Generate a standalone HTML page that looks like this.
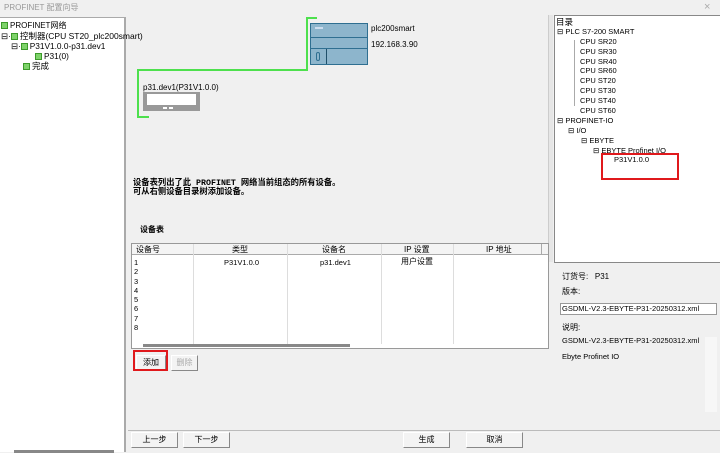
<!DOCTYPE html>
<html><head><meta charset="utf-8"><style>
*{margin:0;padding:0;box-sizing:border-box}
body{width:720px;height:452px;overflow:hidden;background:#f0f0f0;font-family:"Liberation Sans","Noto Sans CJK SC",sans-serif;font-size:8px;color:#000;position:relative}
.a{position:absolute;white-space:nowrap}
.btn{position:absolute;height:16px;background:#f3f3f3;border:1px solid #fff;border-right-color:#888;border-bottom-color:#888;text-align:center;line-height:14px;font-size:8px}
.sq{display:inline-block;width:7px;height:7px;background:#7ed36a;border:1px solid #3c9a2a;vertical-align:-1px;margin-right:2px}
</style></head><body>
<div class="a" style="left:4px;top:2px;color:#999;font-size:8px">PROFINET 配置向导</div>
<div class="a" style="left:704px;top:1px;color:#aaa;font-size:11px">×</div>
<!-- left tree -->
<div class="a" style="left:0;top:17px;width:126px;height:435px;background:#fff;border-right:2px solid #aaa;border-top:1px solid #aaa"></div>
<div class="a" style="left:1px;top:20px"><span class="sq"></span>PROFINET网络</div>
<div class="a" style="left:1px;top:30px;font-size:8.5px">⊟·<span class="sq"></span>控制器(CPU ST20_plc200smart)</div>
<div class="a" style="left:11px;top:41px;font-size:8.3px">⊟·<span class="sq"></span>P31V1.0.0-p31.dev1</div>
<div class="a" style="left:35px;top:51px;font-size:8.3px"><span class="sq"></span>P31(0)</div>
<div class="a" style="left:23px;top:60px;font-size:8.5px"><span class="sq"></span>完成</div>
<div class="a" style="left:14px;top:450px;width:100px;height:3px;background:#888"></div>
<!-- network -->
<div class="a" style="left:306px;top:17px;width:11px;height:52px;border:2px solid #4de04d;border-right:none;border-bottom:none"></div>
<div class="a" style="left:138px;top:69px;width:170px;height:2px;background:#4de04d"></div>
<div class="a" style="left:137px;top:69px;width:2px;height:48px;background:#4de04d"></div>
<div class="a" style="left:137px;top:116px;width:12px;height:2px;background:#4de04d"></div>
<div class="a" style="left:310px;top:23px;width:58px;height:42px;background:#8db5cc;border:1px solid #2f6f91"></div>
<div class="a" style="left:311px;top:37px;width:56px;height:1px;background:#2f6f91"></div>
<div class="a" style="left:311px;top:48px;width:56px;height:1px;background:#2f6f91"></div>
<div class="a" style="left:326px;top:49px;width:1px;height:15px;background:#1f4f6a"></div>
<div class="a" style="left:315px;top:27px;width:8px;height:2px;background:#cde"></div>
<div class="a" style="left:316px;top:52px;width:4px;height:9px;border:1px solid #2f6f91;border-radius:2px"></div>
<div class="a" style="left:371px;top:24px">plc200smart</div>
<div class="a" style="left:371px;top:40px">192.168.3.90</div>
<div class="a" style="left:143px;top:83px">p31.dev1(P31V1.0.0)</div>
<div class="a" style="left:143px;top:92px;width:57px;height:19px;background:#999"></div>
<div class="a" style="left:147px;top:94px;width:49px;height:11px;background:#fff"></div>
<div class="a" style="left:163px;top:107px;width:4px;height:2px;background:#fff"></div>
<div class="a" style="left:169px;top:107px;width:4px;height:2px;background:#fff"></div>
<!-- middle scroll -->
<div class="a" style="left:548px;top:15px;width:5px;height:247px;background:#e6e6e6;border-left:1px solid #ccc"></div>
<div class="a" style="left:133px;top:179px;font-size:8.3px;font-weight:bold;line-height:9px;font-family:'Liberation Mono','Noto Sans CJK SC',monospace">设备表列出了此 PROFINET 网络当前组态的所有设备。<br>可从右侧设备目录树添加设备。</div>
<div class="a" style="left:140px;top:224px;font-weight:bold">设备表</div>
<!-- table -->
<div class="a" style="left:131px;top:243px;width:418px;height:106px;background:#fff;border:1px solid #999"></div>
<div class="a" style="left:132px;top:244px;width:416px;height:11px;background:#f4f4f4;border-bottom:1px solid #aaa"></div>
<div class="a" style="left:136px;top:244px">设备号</div>
<div class="a" style="left:232px;top:244px">类型</div>
<div class="a" style="left:322px;top:244px">设备名</div>
<div class="a" style="left:404px;top:244px">IP 设置</div>
<div class="a" style="left:486px;top:244px">IP 地址</div>
<div class="a" style="left:193px;top:244px;width:1px;height:100px;background:#ddd"></div>
<div class="a" style="left:287px;top:244px;width:1px;height:100px;background:#ddd"></div>
<div class="a" style="left:381px;top:244px;width:1px;height:100px;background:#ddd"></div>
<div class="a" style="left:453px;top:244px;width:1px;height:100px;background:#ddd"></div>
<div class="a" style="left:541px;top:244px;width:1px;height:10px;background:#aaa"></div>
<div class="a" style="left:134px;top:258px;line-height:9.3px;font-size:7.5px">1<br>2<br>3<br>4<br>5<br>6<br>7<br>8</div>
<div class="a" style="left:224px;top:258px;font-size:7.5px">P31V1.0.0</div>
<div class="a" style="left:320px;top:258px;font-size:7.5px">p31.dev1</div>
<div class="a" style="left:401px;top:256px">用户设置</div>
<div class="a" style="left:143px;top:344px;width:207px;height:3px;background:#888"></div>
<div class="btn" style="left:136px;top:355px;width:30px">添加</div>
<div class="a" style="left:133px;top:350px;width:35px;height:21px;border:2px solid #e0191c"></div>
<div class="btn" style="left:171px;top:355px;width:27px;color:#aaa">删除</div>
<!-- right tree -->
<div class="a" style="left:554px;top:15px;width:170px;height:248px;background:#fff;border:1px solid #888"></div>
<div class="a" style="left:556px;top:16px;font-size:8.5px">目录</div>
<div class="a" style="left:557px;top:27px;line-height:9.8px;font-size:7.5px">⊟ PLC S7-200 SMART</div>
<div class="a" style="left:580px;top:37px;line-height:9.8px;font-size:7.5px">CPU SR20<br>CPU SR30<br>CPU SR40<br>CPU SR60<br>CPU ST20<br>CPU ST30<br>CPU ST40<br>CPU ST60</div>
<div class="a" style="left:574px;top:40px;width:1px;height:66px;background:#aaa"></div>
<div class="a" style="left:557px;top:116px;font-size:7.5px">⊟ PROFINET-IO</div>
<div class="a" style="left:568px;top:126px;font-size:7.5px">⊟ I/O</div>
<div class="a" style="left:581px;top:136px;font-size:7.5px">⊟ EBYTE</div>
<div class="a" style="left:593px;top:146px;font-size:7.5px">⊟ EBYTE Profinet I/O</div>
<div class="a" style="left:614px;top:155px;font-size:7.5px">P31V1.0.0</div>
<div class="a" style="left:601px;top:153px;width:78px;height:27px;border:2px solid #e0191c"></div>
<div class="a" style="left:562px;top:271px">订货号:&nbsp;&nbsp;&nbsp;P31</div>
<div class="a" style="left:562px;top:286px">版本:</div>
<div class="a" style="left:560px;top:303px;width:157px;height:12px;background:#fff;border:1px solid #999;font-size:7.5px;line-height:10px;padding-left:1px">GSDML-V2.3-EBYTE-P31-20250312.xml</div>
<div class="a" style="left:562px;top:322px">说明:</div>
<div class="a" style="left:562px;top:336px;font-size:7.5px">GSDML-V2.3-EBYTE-P31-20250312.xml</div>
<div class="a" style="left:562px;top:352px;font-size:7.5px">Ebyte Profinet IO</div>
<div class="a" style="left:705px;top:337px;width:12px;height:75px;background:#f7f7f7"></div>
<div class="a" style="left:554px;top:430px;width:166px;height:1px;background:#bbb"></div>
<!-- bottom -->
<div class="a" style="left:128px;top:430px;width:430px;height:1px;background:#bbb"></div>
<div class="btn" style="left:131px;top:432px;width:47px">上一步</div>
<div class="btn" style="left:183px;top:432px;width:47px">下一步</div>
<div class="btn" style="left:403px;top:432px;width:47px">生成</div>
<div class="btn" style="left:466px;top:432px;width:57px">取消</div>
</body></html>
